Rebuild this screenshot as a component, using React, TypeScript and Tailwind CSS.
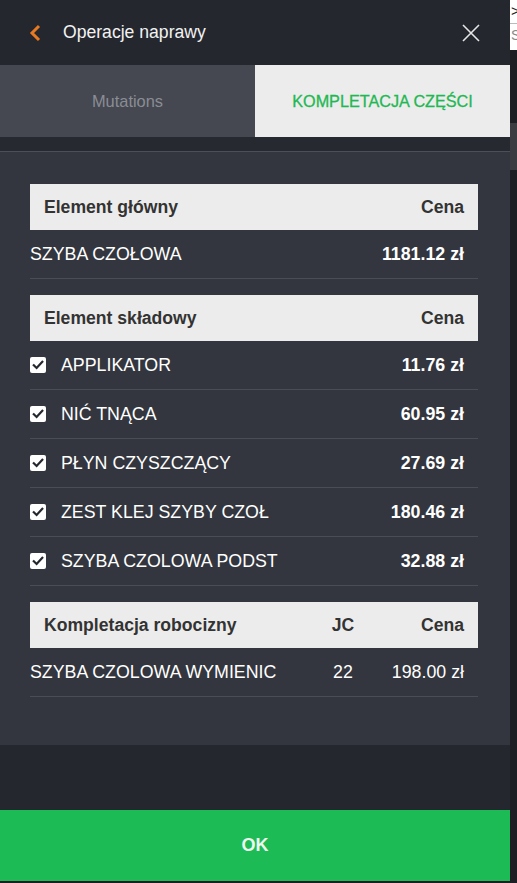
import React from "react";

const font = { fontFamily: '"Liberation Sans", Arial, sans-serif' };

function Check() {
  return (
    <div className="w-[16px] h-[16px] bg-white rounded-[2px] flex items-center justify-center shrink-0">
      <svg width="12" height="12" viewBox="0 0 12 12">
        <path d="M1.8 6.2 L4.6 9 L10.3 2.8" fill="none" stroke="#25272e" strokeWidth="2.2" strokeLinecap="square" />
      </svg>
    </div>
  );
}

function HeadRow({ left, mid, right }: { left: string; mid?: string; right: string }) {
  return (
    <div className="h-[46px] bg-[#ececec] flex items-center pl-[14px] pr-[14px] text-[17.6px] font-bold text-[#333333]">
      <span className="flex-1">{left}</span>
      {mid && <span className="w-[40px] text-center">{mid}</span>}
      <span className={mid ? "w-[101px] text-right" : ""}>{right}</span>
    </div>
  );
}

function Row({ label, price, check, mid }: { label: string; price: string; check?: boolean; mid?: string }) {
  return (
    <div className="h-[49px] border-b border-[#4a4d55] flex items-center pr-[14px] text-[17.8px] text-white">
      {check && (
        <div className="mr-[15px]">
          <Check />
        </div>
      )}
      <span className="flex-1">{label}</span>
      {mid && <span className="w-[40px] text-center">{mid}</span>}
      <span className={mid ? "w-[101px] text-right" : "font-bold"}>{price}</span>
    </div>
  );
}

export default function App() {
  const parts = [
    ["APPLIKATOR", "11.76 zł"],
    ["NIĆ TNĄCA", "60.95 zł"],
    ["PŁYN CZYSZCZĄCY", "27.69 zł"],
    ["ZEST KLEJ SZYBY CZOŁ", "180.46 zł"],
    ["SZYBA CZOLOWA PODST", "32.88 zł"],
  ];
  return (
    <div className="w-[517px] h-[883px] flex bg-[#1c1e24] overflow-hidden" style={font}>
      <div className="w-[510px] shrink-0 h-full flex flex-col bg-[#25272e]">
        {/* header */}
        <div className="h-[65px] flex items-center pl-[28px] pr-[29px] shrink-0">
          <svg width="14" height="18" viewBox="0 0 14 18" className="mr-[21px]">
            <path d="M11 2 L4 9 L11 16" fill="none" stroke="#e87a22" strokeWidth="3" />
          </svg>
          <span className="flex-1 text-[17.6px] text-[#f2f2f2]">Operacje naprawy</span>
          <svg width="20" height="20" viewBox="0 0 20 20">
            <path d="M2 2 L18 18 M18 2 L2 18" stroke="#e6e6e6" strokeWidth="1.6" fill="none" />
          </svg>
        </div>
        {/* tabs */}
        <div className="h-[72px] flex shrink-0">
          <div className="w-[255px] bg-[#454851] flex items-center justify-center text-[16.4px] text-[#8a8d94]">
            Mutations
          </div>
          <div className="flex-1 bg-[#ececec] flex items-center justify-center text-[16.2px] text-[#1fb852] [-webkit-text-stroke:0.3px_#1fb852]">
            KOMPLETACJA CZĘŚCI
          </div>
        </div>
        <div className="h-[14px] bg-[#262930] shrink-0" />
        <div className="h-[1px] bg-[#4c4f57] shrink-0" />
        {/* content */}
        <div className="h-[593px] bg-[#33363e] pt-[32px] pl-[30px] pr-[32px] shrink-0">
          <HeadRow left="Element główny" right="Cena" />
          <Row label="SZYBA CZOŁOWA" price="1181.12 zł" />
          <div className="h-[16px]" />
          <HeadRow left="Element składowy" right="Cena" />
          {parts.map(([l, p]) => (
            <Row key={l} label={l} price={p} check />
          ))}
          <div className="h-[16px]" />
          <HeadRow left="Kompletacja robocizny" mid="JC" right="Cena" />
          <Row label="SZYBA CZOLOWA WYMIENIC" mid="22" price="198.00 zł" />
        </div>
        <div className="flex-1 bg-[#25272e]" />
        <div className="h-[71px] bg-[#1dbb55] flex items-center justify-center text-[18px] font-bold text-[#eefaf1] shrink-0">
          OK
        </div>
        <div className="h-[2px] bg-[#1c1e24] shrink-0" />
      </div>
      {/* strip of page behind */}
      <div className="flex-1 flex flex-col">
        <div className="h-[50px] bg-white flex flex-col overflow-hidden">
          <div className="h-[24px] border-b border-[#bbbbbb] text-[15px] leading-[22px] text-[#222] pl-[1px]">&gt;</div>
          <div className="text-[14px] leading-[22px] text-[#888] pl-[1px]">S</div>
        </div>
        <div className="h-[73px]" />
        <div className="h-[47px] bg-[#3a3c42]" />
      </div>
    </div>
  );
}
